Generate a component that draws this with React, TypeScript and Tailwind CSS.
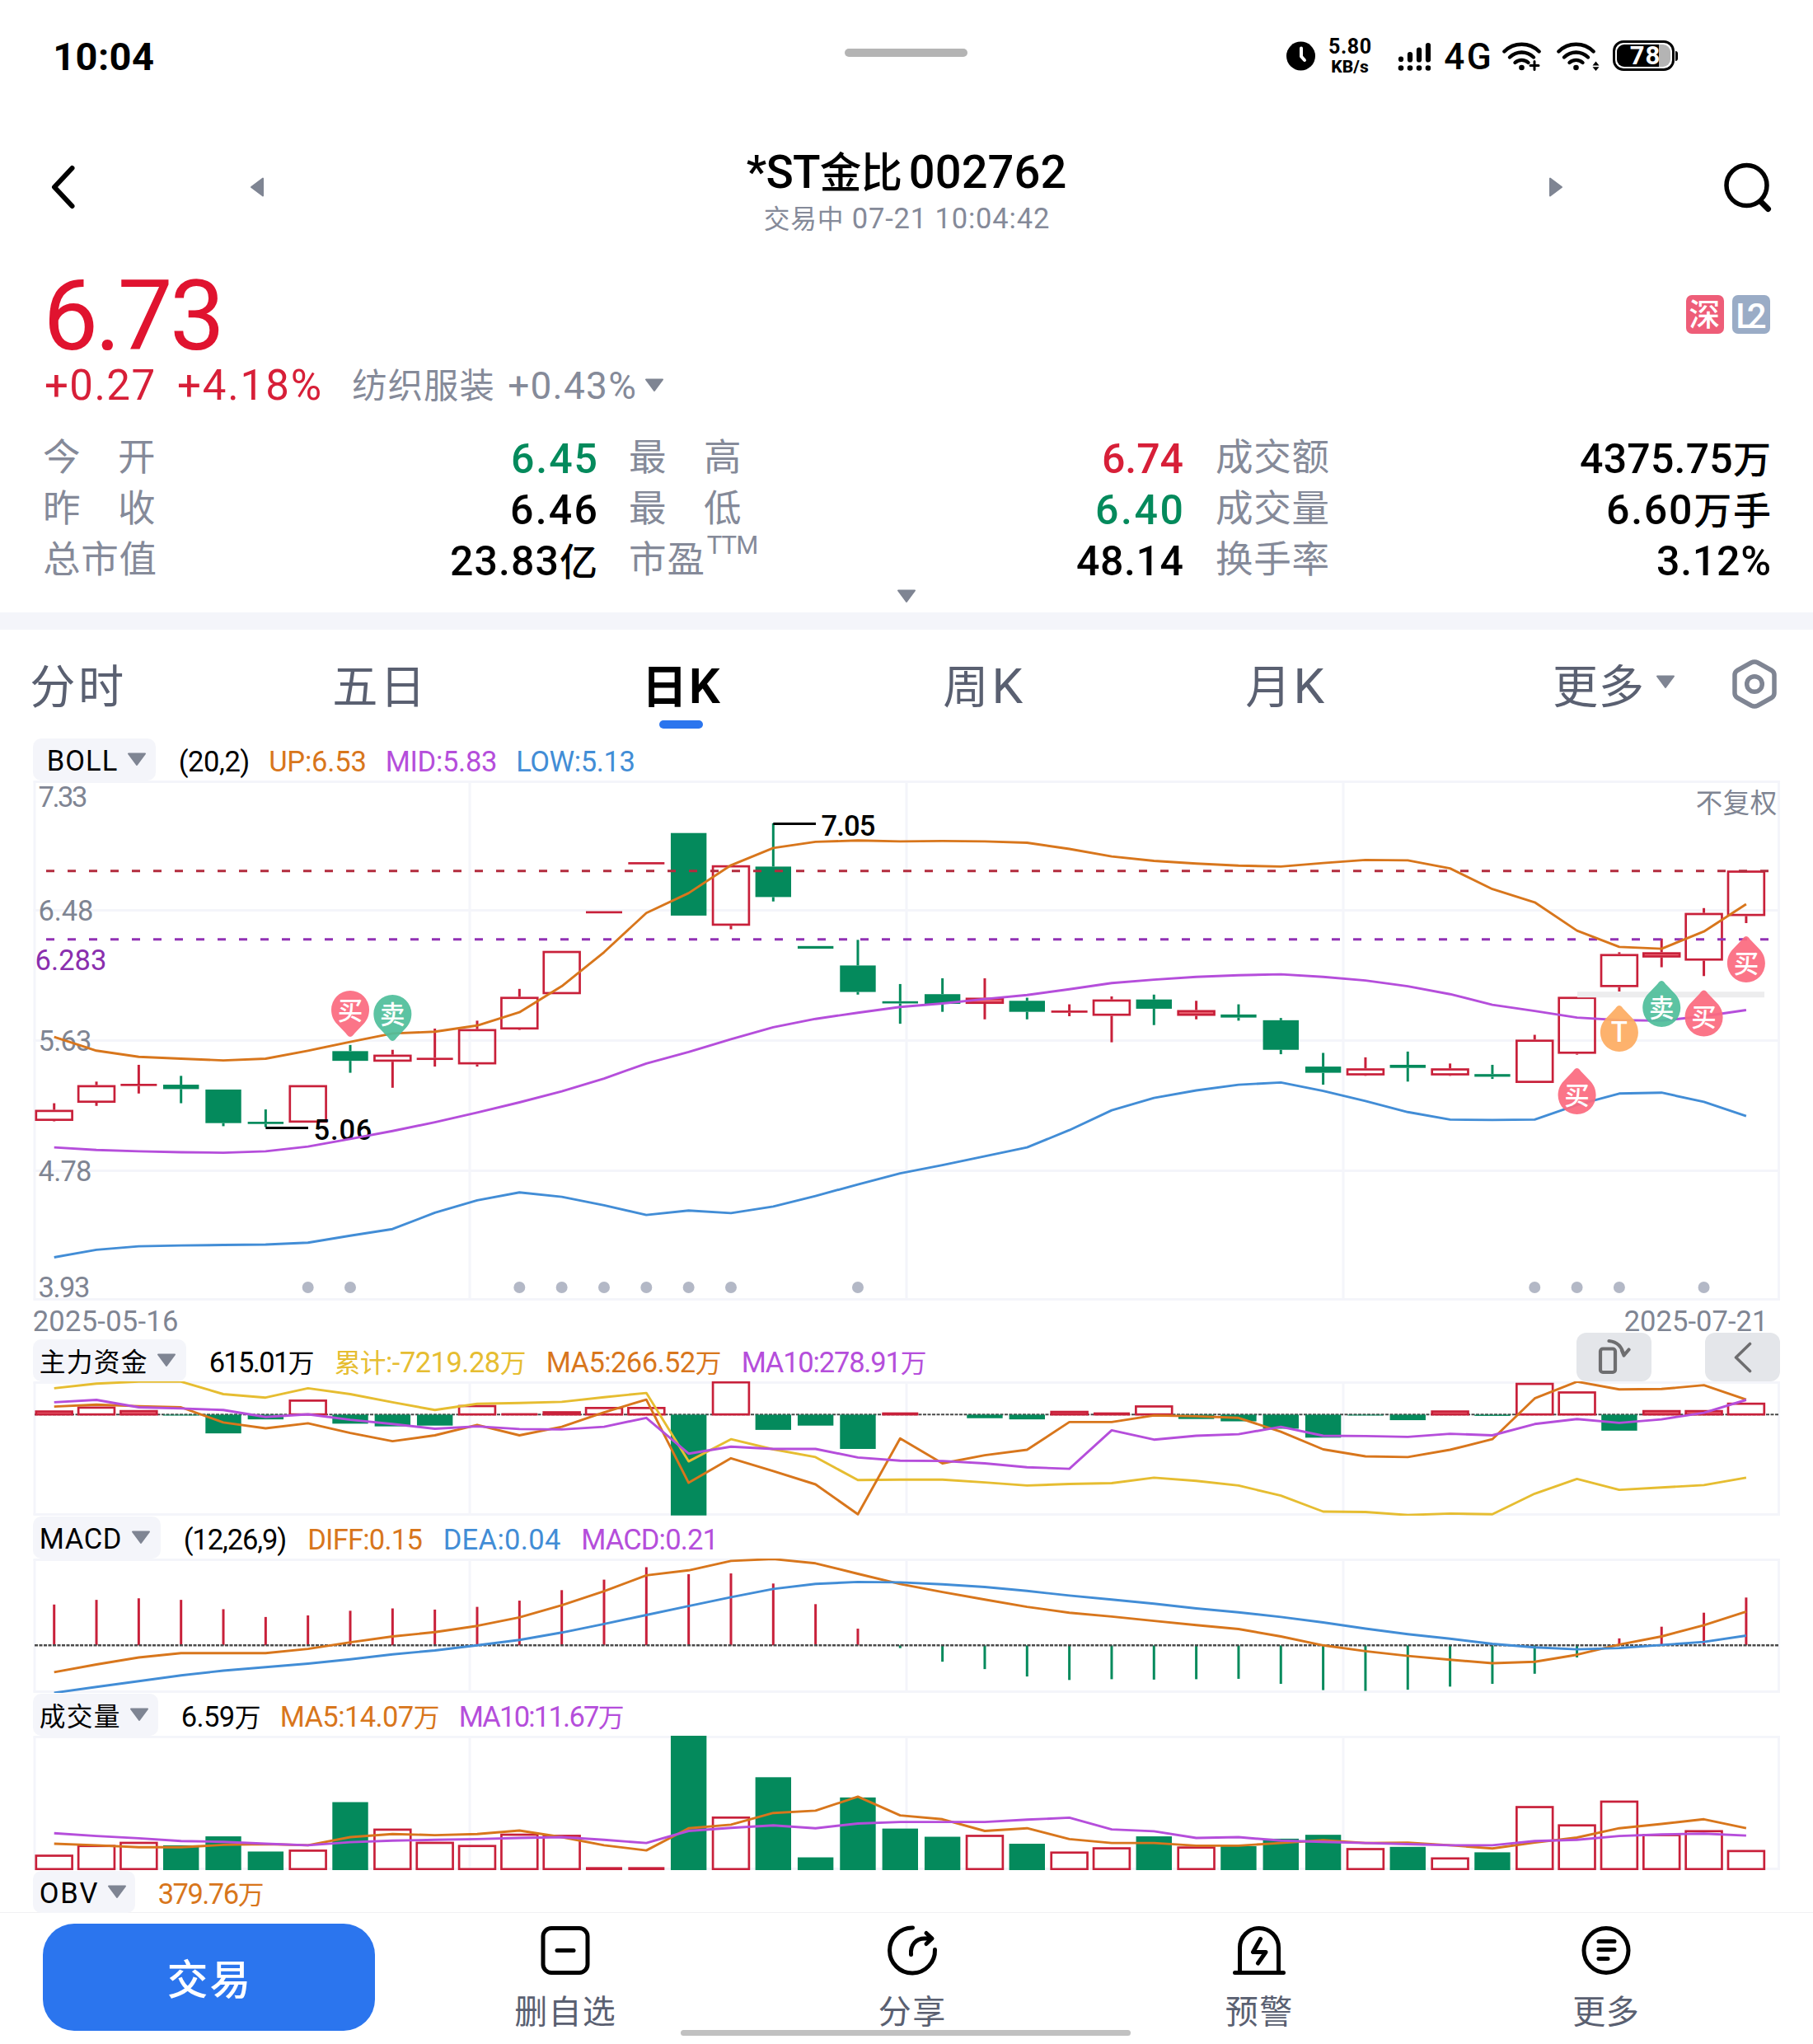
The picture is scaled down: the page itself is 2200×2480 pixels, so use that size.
import React, { useLayoutEffect, useRef, useState } from "react";
import clsx from "clsx";

const RED = "#c8203a";
const GREEN = "#048a5c";
const ORANGE = "#d8761c";
const PURPLE = "#b54edb";
const BLUE = "#428dd6";
const YELLOW = "#e6bd31";
const GRID = "#f4f5fa";

/* Splits Chinese and Latin runs so each gets its own face and optical size. */
function Mixed({ text }: { text: string }) {
  const parts = text.split(/([\u4e00-\u9fff]+)/).filter(Boolean);
  return (
    <>
      {parts.map((p, i) =>
        /[\u4e00-\u9fff]/.test(p) ? (
          <span key={i} className="text-[0.92em] leading-none font-['Noto_Sans_CJK_SC',sans-serif]">
            {p}
          </span>
        ) : (
          <React.Fragment key={i}>{p}</React.Fragment>
        ),
      )}
    </>
  );
}

/* One line of text whose tracking is adjusted to fill a given width. */
function Fit({ text, w, className }: { text: string; w: number; className?: string }) {
  const ref = useRef<HTMLSpanElement>(null);
  const [ls, setLs] = useState(0);
  useLayoutEffect(() => {
    const el = ref.current;
    if (!el) return;
    el.style.letterSpacing = "0px";
    const size = parseFloat(getComputedStyle(el).fontSize);
    const nat = el.getBoundingClientRect().width;
    const next = (w + 0.08 * size - nat) / Math.max(1, text.length - 1);
    el.style.letterSpacing = `${next}px`;
    setLs(next);
  }, [text, w]);
  return (
    <span className={clsx("block shrink-0 whitespace-nowrap", className)} style={{ width: w }}>
      <span ref={ref} className="-ml-[0.04em] inline-block" style={{ letterSpacing: `${ls}px` }}>
        <Mixed text={text} />
      </span>
    </span>
  );
}

function Caret({ className = "text-[#7f8593]" }: { className?: string }) {
  return (
    <svg width="24" height="17" viewBox="0 0 24 17" className={clsx("shrink-0", className)}>
      <path d="M2 1.5h20L12 15z" fill="currentColor" stroke="currentColor" strokeWidth="2" strokeLinejoin="round" />
    </svg>
  );
}

/* ---------- status bar ---------- */

function Wifi({ variant }: { variant: "plus" | "arrows" }) {
  return (
    <svg width="52" height="36" viewBox="0 0 52 36" fill="none" stroke="#000" strokeWidth="4.4" strokeLinecap="round">
      <path d="M2.4 12.5C14 .8 33 .8 44.6 12.5" />
      <path d="M9 19.5c8.500-8 20.500-8 29 0" />
      <path d="M15.500 26c4.500-4.200 11.500-4.200 16 0" />
      <circle cx="23.500" cy="32" r="3.300" fill="#000" stroke="none" />
      {variant === "plus" ? (
        <path d="M39 24.500v10M34 29.500h10" strokeWidth="3" />
      ) : (
        <path d="M47.500 24.500l4 5h-8zM47.500 36l4-4.800h-8z" fill="#000" stroke="none" />
      )}
    </svg>
  );
}

function StatusBar() {
  return (
    <div className="relative flex h-[135px] items-center pl-[66px] font-semibold">
      <Fit text="10:04" w={119} className="pt-[3px] text-[47px] leading-[60px] font-bold" />
      <div className="absolute top-[59px] left-[1025px] h-[10px] w-[149px] rounded-full bg-[#b4b4b4]" />
      <svg width="36" height="36" viewBox="0 0 36 36" className="ml-[1376px]">
        <circle cx="17.500" cy="18" r="17.500" />
        <path d="M18 8.500v10l4 4.500" fill="none" stroke="#fff" strokeWidth="4" strokeLinecap="round" strokeLinejoin="round" />
      </svg>
      <div className="ml-[15px] flex w-[52px] flex-col items-center pt-[2px] font-bold">
        <Fit text="5.80" w={50} className="text-[25px] leading-[24px]" />
        <Fit text="KB/s" w={44} className="text-[21px] leading-[24px] font-extrabold" />
      </div>
      <svg width="40" height="36" viewBox="0 0 40 36" className="ml-[32px]">
        {[0, 1, 2, 3].map((i) => (
          <circle key={i} cx={4 + i * 11} cy="32.500" r="3.300" />
        ))}
        <g stroke="#000" strokeWidth="6.200" strokeLinecap="round">
          <path d="M4 21.500v.5M15 16v6.500M26 10.500v12M37 5v17.500" />
        </g>
      </svg>
      <Fit text="4G" w={54} className="ml-[18px] pt-[2px] text-[44px] leading-[60px] font-medium" />
      <div className="ml-[15px]">
        <Wifi variant="plus" />
      </div>
      <div className="ml-[14px]">
        <Wifi variant="arrows" />
      </div>
      <div className="relative ml-[16px] flex h-[37px] w-[75px] items-center rounded-[13px] border-[3px] border-black bg-white p-[2px]">
        <div className="flex h-full w-full items-center rounded-[9px] bg-[#b4b4b4]">
          <div className="flex h-full w-[51px] items-center justify-end rounded-l-[9px] bg-black">
            <Fit text="78" w={34} className="text-[31px] leading-[27px] font-bold text-white" />
          </div>
        </div>
        <div className="absolute top-[10px] -right-[7px] h-[12px] w-[3px] rounded-r-full bg-black" />
      </div>
    </div>
  );
}

/* ---------- header ---------- */

function Header() {
  return (
    <div className="flex h-[184px] items-center">
      <svg width="34" height="58" viewBox="0 0 34 58" className="ml-[59px]" fill="none" stroke="#000" strokeWidth="6" strokeLinecap="round" strokeLinejoin="round">
        <path d="M28.500 6L7 29l21.500 23" />
      </svg>
      <svg width="18" height="24" viewBox="0 0 18 24" className="ml-[210px]" fill="#7f8593">
        <path d="M16 1.500v21L2 12z" stroke="#7f8593" strokeWidth="2" strokeLinejoin="round" />
      </svg>
      <div className="mt-[20px] flex flex-1 flex-col items-center">
        <div className="flex">
          <Fit text="*ST金比" w={185} className="text-[55px] leading-[56px] font-medium" />
          <Fit text="002762" w={187} className="ml-[12px] text-[56px] leading-[56px] font-medium" />
        </div>
        <Fit text="交易中 07-21 10:04:42" w={344} className="text-[34.500px] leading-[56px] text-[#858a99]" />
      </div>
      <svg width="18" height="24" viewBox="0 0 18 24" className="mr-[191px]" fill="#7f8593">
        <path d="M2 1.500v21L16 12z" stroke="#7f8593" strokeWidth="2" strokeLinejoin="round" />
      </svg>
      <svg width="64" height="64" viewBox="0 0 64 64" className="mr-[48px]" fill="none" stroke="#000" strokeWidth="5.500" strokeLinecap="round">
        <circle cx="31.500" cy="30" r="24.500" />
        <path d="M49 50l8.500 8.500" strokeWidth="7" />
      </svg>
    </div>
  );
}

/* ---------- quote ---------- */

type Cell = { label: string; spread?: boolean; sup?: string; value: string; w: number; color?: string };

const quoteColumns: Cell[][] = [
  [
    { label: "今开", spread: true, value: "6.45", w: 101, color: "text-[#048a5c]" },
    { label: "昨收", spread: true, value: "6.46", w: 102 },
    { label: "总市值", value: "23.83亿", w: 175 },
  ],
  [
    { label: "最高", spread: true, value: "6.74", w: 95, color: "text-[#d71f38]" },
    { label: "最低", spread: true, value: "6.40", w: 103, color: "text-[#048a5c]" },
    { label: "市盈", sup: "TTM", value: "48.14", w: 126 },
  ],
  [
    { label: "成交额", value: "4375.75万", w: 228 },
    { label: "成交量", value: "6.60万手", w: 196 },
    { label: "换手率", value: "3.12%", w: 135 },
  ],
];

function QuoteLabel({ cell }: { cell: Cell }) {
  if (cell.spread) {
    return (
      <span className="flex w-[134px] justify-between">
        {[...cell.label].map((ch) => (
          <Fit key={ch} text={ch} w={43} />
        ))}
      </span>
    );
  }
  if (cell.sup) {
    return (
      <span className="flex">
        <Fit text={cell.label} w={88} />
        <Fit text={cell.sup} w={60} className="-mt-[16px] ml-[6px] text-[31px]" />
      </span>
    );
  }
  return <Fit text={cell.label} w={134} />;
}

function Quote() {
  return (
    <div>
      <div className="flex h-[124px] items-center justify-between pr-[52px] pl-[57px]">
        <Fit text="6.73" w={211} className="pt-[6px] text-[119px] leading-[118px] font-[450] text-[#e0132f]" />
        <div className="flex gap-[10px] font-medium text-white">
          <span className="flex h-[47px] w-[46px] items-center justify-center rounded-[7px] bg-[#ee5d78]">
            <Fit text="深" w={36} className="text-[41px] leading-[46px]" />
          </span>
          <span className="flex h-[47px] w-[46px] items-center justify-center rounded-[7px] bg-[#9aacc6]">
            <Fit text="L2" w={34} className="pt-[4px] text-[42px] leading-[43px]" />
          </span>
        </div>
      </div>
      <div className="flex h-[48px] items-center pl-[56px] text-[51px] leading-[48px] text-[#d71f38]">
        <Fit text="+0.27" w={130} className="pt-[2px] font-[450]" />
        <Fit text="+4.18%" w={171} className="ml-[31px] pt-[2px] font-[450]" />
        <div className="flex items-center text-[46px] text-[#858a99]">
          <Fit text="纺织服装" w={169} className="ml-[41px]" />
          <Fit text="+0.43%" w={152} className="ml-[20px] pt-[2px]" />
          <div className="ml-[12px]">
            <Caret />
          </div>
        </div>
      </div>
      <div className="mt-[34px] flex pr-[53px] pl-[54px]">
        {quoteColumns.map((col, i) => (
          <div
            key={i}
            className={clsx(
              "flex flex-col",
              i === 0 && "w-[669px]",
              i === 1 && "ml-[42px] w-[669px]",
              i === 2 && "ml-[43px] w-[670px]",
            )}
          >
            {col.map((c) => (
              <div key={c.label} className="flex h-[62px] items-center justify-between">
                <span className="mt-[-4px] text-[49.500px] leading-[62px] text-[#858a99]">
                  <QuoteLabel cell={c} />
                </span>
                <Fit text={c.value} w={c.w} className={clsx("pt-[3px] text-[50px] leading-[59px] font-medium", c.color ?? "text-black")} />
              </div>
            ))}
          </div>
        ))}
      </div>
      <div className="flex h-[32px] justify-center pt-[4px]">
        <Caret />
      </div>
    </div>
  );
}

/* ---------- period tabs ---------- */

const periods = [
  { label: "分时", w: 109 },
  { label: "五日", w: 108 },
  { label: "日K", w: 90, active: true },
  { label: "周K", w: 92 },
  { label: "月K", w: 91 },
];

function PeriodTabs() {
  return (
    <div className="flex h-[131px] items-center text-[60px] leading-[80px] text-[#5a6071]">
      <div className="-ml-[90px] flex pt-[7px]">
        {periods.map((p) => (
          <div key={p.label} className="relative flex w-[366.500px] justify-center">
            <Fit text={p.label} w={p.w} className={clsx(p.active && "font-semibold text-black")} />
            {p.active && <span className="absolute top-[81px] h-[10px] w-[53px] rounded-full bg-[#2b75ee]" />}
          </div>
        ))}
      </div>
      <Fit text="更多" w={106} className="ml-[144px] pt-[7px]" />
      <div className="ml-[16px] pb-[4px]">
        <Caret />
      </div>
      <svg width="62" height="64" viewBox="0 0 62 64" className="ml-[65px]" fill="none" stroke="#7f8593" strokeWidth="5.500" strokeLinejoin="round">
        <path d="M31 5Q33 5 35 6L52 15.500Q55 17.500 55 21V43Q55 46.500 52 48.500L35 58Q31 60 27 58L10 48.500Q7 46.500 7 43V21Q7 17.500 10 15.500L27 6Q29 5 31 5Z" />
        <circle cx="31" cy="32" r="9.300" />
      </svg>
    </div>
  );
}

/* ---------- indicator legend ---------- */

type LegendItem = [text: string, width: number, color: string];

function Legend({ name, nameWidth, chip, inset = "pl-[9px]", gap = "gap-[26.500px]", items }: { name: string; nameWidth: number; chip: string; inset?: string; gap?: string; items: LegendItem[] }) {
  return (
    <div className="ml-[40px] flex h-[52px] items-center text-[34.500px] leading-[48px] font-[430]">
      <div className={clsx("flex h-[51px] shrink-0 items-center gap-[13px] rounded-[10px] bg-[#f4f5fa]", chip, inset)}>
        <Fit text={name} w={nameWidth} className="pt-[4px] text-black" />
        <Caret />
      </div>
      <div className={clsx("ml-[29px] flex pt-[5px]", gap)}>
        {items.map(([text, w, color]) => (
          <Fit key={text} text={text} w={w} className={color} />
        ))}
      </div>
    </div>
  );
}

const black = "text-black";
const orange = "text-[#d8761c]";
const purple = "text-[#b54edb]";
const blue = "text-[#428dd6]";
const yellow = "text-[#e6bd31]";

/* ---------- charts ---------- */

const cx = (i: number) => 65.7 + 51.33 * i;
const gridX = [42, 570, 1100, 1630, 2158.5];

function Line({ data, y, color }: { data: number[]; y: (v: number) => number; color: string }) {
  return (
    <polyline
      fill="none"
      stroke={color}
      strokeWidth="2.900"
      strokeLinejoin="round"
      points={data.map((v, i) => `${cx(i).toFixed(1)},${y(v).toFixed(1)}`).join(" ")}
    />
  );
}

function Bar({ i, top, bottom, up }: { i: number; top: number; bottom: number; up: boolean }) {
  const x = cx(i);
  if (!up) return <rect x={x - 21.7} y={top} width={43.4} height={Math.max(bottom - top, 1)} fill={GREEN} />;
  const h = bottom - top;
  if (h < 4) return <rect x={x - 22} y={top} width={44} height={h} fill={RED} />;
  return <rect x={x - 21.9} y={top + 1.3} width={43.8} height={h - 2.6} fill={h < 7.6 ? "#f06a78" : "none"} stroke={RED} strokeWidth="2.700" />;
}

function ChartText({ x, y, w, size = 34.5, color = "#7f8593", weight = 430, cjk, children }: { x: number; y: number; w: number; size?: number; color?: string; weight?: number; cjk?: boolean; children: string }) {
  return (
    <text
      x={x - 0.04 * size}
      y={y + (cjk ? 0.38 : 0.3555) * size}
      textLength={w + 0.08 * size}
      fontSize={size}
      fontWeight={weight}
      fill={color}
      fontFamily={cjk ? "'Noto Sans CJK SC', sans-serif" : "Roboto, sans-serif"}
    >
      {children}
    </text>
  );
}

/* body top, body bottom, wick high, wick low, rising */
type Candle = [number, number, number, number, 0 | 1];
const candles: Candle[] = [
  [1095, 1120, 1080, 1121, 1], [1039, 1079, 1031, 1086, 1], [1036, 1041, 993, 1058, 1], [1038, 1048, 1018, 1080, 0],
  [1049, 1125, 1049, 1132, 0], [1122, 1127, 1094, 1134, 0], [1039, 1124, 1039, 1124, 1], [962, 984, 948, 1011, 0],
  [970, 986, 959, 1045, 1], [977, 982, 911, 997, 1], [912, 992, 893, 997, 1], [839, 913, 821, 914, 1],
  [735, 833, 735, 833, 1], [645, 650, 645, 650, 1], [534, 539, 534, 539, 1], [468, 655, 468, 655, 0],
  [541, 678, 541, 686, 1], [544, 613, 446, 623, 0], [724, 730, 724, 730, 0], [768, 828, 710, 834, 0],
  [849, 854, 810, 900, 0], [833, 855, 797, 873, 0], [841, 855, 797, 890, 1], [848, 873, 841, 890, 0],
  [870, 875, 856, 883, 1], [845, 882, 838, 942, 1], [845, 866, 834, 903, 0], [869, 882, 848, 890, 1],
  [879, 886, 856, 893, 0], [892, 959, 887, 969, 0], [997, 1011, 966, 1038, 0], [1001, 1017, 976, 1018, 1],
  [993, 1000, 963, 1031, 0], [1001, 1017, 990, 1018, 1], [1014, 1020, 993, 1025, 0], [936, 1034, 925, 1034, 1],
  [839, 968, 839, 970, 1], [742, 817, 738, 827, 1], [738, 750, 707, 772, 1], [649, 757, 638, 792, 1],
  [553, 656, 553, 672, 1],
];
const bollUp = [930, 961, 975, 979, 983, 979, 961, 941, 922, 918, 904, 874, 815, 738, 649, 604, 541, 502, 488, 485, 487, 486, 487, 490, 504, 521, 531, 537, 542, 544, 536, 529, 530, 548, 595, 625, 689, 726, 730, 691, 629];
const bollMid = [1180, 1186, 1189, 1191, 1192, 1189, 1178, 1161, 1143, 1123, 1101, 1078, 1053, 1024, 990, 964, 935, 908, 889, 875, 862, 854, 844, 835, 822, 808, 800, 794, 790, 788, 794, 802, 815, 833, 857, 871, 886, 892, 893, 883, 869];
const bollLow = [1429, 1412, 1404, 1402, 1401, 1400, 1396, 1380, 1365, 1328, 1300, 1282, 1292, 1311, 1333, 1323, 1329, 1314, 1290, 1264, 1239, 1220, 1200, 1180, 1141, 1096, 1068, 1051, 1038, 1033, 1052, 1075, 1100, 1117, 1118, 1117, 1084, 1058, 1056, 1077, 1109];
const eventDays = [6, 7, 11, 12, 13, 14, 15, 16, 19, 35, 36, 37, 39];

function Pin({ x, tip, label, fill, down }: { x: number; tip: number; label: string; fill: string; down?: boolean }) {
  const c = down ? tip - 33 : tip + 32;
  return (
    <g opacity="0.93">
      <g transform={down ? `translate(${x} ${tip}) scale(1 -1)` : `translate(${x} ${tip})`}>
        <path d="M0 0C2.500 0 4 3 6 5L16 15.500C20.500 20 23 26 23 33A23 23 0 0 1 -23 33C-23 26 -20.500 20 -16 15.500L-6 5C-4 3 -2.500 0 0 0Z" fill={fill} />
      </g>
      <text
        x={x}
        y={c + 11.5}
        textAnchor="middle"
        fontSize={label === "T" ? 34 : 30.5}
        fontWeight={500}
        fill="#fff"
        fontFamily="'Noto Sans CJK SC', sans-serif"
      >
        {label}
      </text>
    </g>
  );
}

function MainChart() {
  const y = (v: number) => 760 + v * 0.5357;
  const pink = "#fb6b80";
  const mint = "#50bf9c";
  return (
    <svg width="2200" height="632" viewBox="0 947 2200 632" className="block">
      <g stroke={GRID} strokeWidth="3">
        {[948.5, 1104.5, 1262.5, 1420.5, 1576.5].map((v) => (
          <path key={v} d={`M40.500 ${v}H2160`} />
        ))}
        {gridX.map((v) => (
          <path key={v} d={`M${v} 948V1577`} />
        ))}
      </g>
      <ChartText x={48} y={967} w={57}>7.33</ChartText>
      <ChartText x={48} y={1104.5} w={64}>6.48</ChartText>
      <ChartText x={48} y={1262.5} w={62}>5.63</ChartText>
      <ChartText x={48} y={1420.5} w={62}>4.78</ChartText>
      <ChartText x={48} y={1562} w={60}>3.93</ChartText>
      <ChartText x={2059} y={974} w={96} size={32.5} weight={400} cjk>不复权</ChartText>

      {candles.map(([t, b, h, l, up], i) => (
        <g key={i}>
          <g stroke={up ? RED : GREEN} strokeWidth="3">
            {h < t && <path d={`M${cx(i)} ${y(h)}V${y(t)}`} />}
            {l > b && <path d={`M${cx(i)} ${y(b)}V${y(l)}`} />}
          </g>
          <Bar i={i} top={y(t)} bottom={y(b)} up={!!up} />
        </g>
      ))}

      <path d={`M${cx(5)} 1368.500H374`} stroke="#000" strokeWidth="3" />
      <ChartText x={382} y={1370.500} w={68} color="#000" weight={500}>5.06</ChartText>
      <path d={`M${cx(17)} 999.500H990`} stroke="#000" strokeWidth="3" />
      <ChartText x={998} y={1002} w={63} color="#000" weight={500}>7.05</ChartText>

      <path d="M56 1056.800H2146" stroke="#b32c3e" strokeWidth="3" strokeDasharray="10 16" />
      <path d="M56 1139.800H2146" stroke="#9132b4" strokeWidth="3" strokeDasharray="10 16" />
      <ChartText x={44} y={1164.500} w={84} color="#8a2fae">6.283</ChartText>
      <path d="M1914 1206.800H2141" stroke="#ededee" strokeWidth="7" />

      <Line data={bollUp} y={y} color={ORANGE} />
      <Line data={bollMid} y={y} color={PURPLE} />
      <Line data={bollLow} y={y} color={BLUE} />

      {eventDays.map((i) => (
        <circle key={i} cx={cx(i)} cy={1562} r="7" fill="#b3b8c6" />
      ))}

      <Pin x={cx(7)} tip={1258} label="买" fill={pink} down />
      <Pin x={cx(8)} tip={1263} label="卖" fill={mint} down />
      <Pin x={cx(36)} tip={1296} label="买" fill={pink} />
      <Pin x={cx(37)} tip={1220} label="T" fill="#fdad62" />
      <Pin x={cx(38)} tip={1190} label="卖" fill={mint} />
      <Pin x={cx(39)} tip={1201.5} label="买" fill={pink} />
      <Pin x={cx(40)} tip={1136} label="买" fill={pink} />
    </svg>
  );
}

function SubFrame({ top, children }: { top: number; children: React.ReactNode }) {
  return (
    <svg width="2200" height="163" viewBox={`0 ${top} 2200 163`} className="block">
      <g stroke={GRID} strokeWidth="3">
        <path d={`M40.500 ${top + 1.5}H2160M40.500 ${top + 161.5}H2160`} />
        {gridX.map((v) => (
          <path key={v} d={`M${v} ${top + 1}V${top + 162}`} />
        ))}
      </g>
      {children}
    </svg>
  );
}

const sy = (v: number) => 1590 + v * 0.47194;

/* [far edge of the bar, inflow] */
const fundBars: [number, 0 | 1][] = [
  [257, 1], [247, 1], [256, 1], [269, 0], [316, 0], [280, 0], [229, 1], [291, 0], [298, 0], [296, 0], [243, 1],
  [264, 1], [259, 1], [248, 1], [248, 1], [527, 0], [182, 1], [307, 0], [296, 0], [356, 0], [262, 1], [268, 0],
  [277, 0], [280, 0], [258, 1], [262, 1], [244, 1], [279, 0], [285, 0], [304, 0], [327, 0], [269, 0], [282, 0],
  [257, 1], [271, 0], [186, 1], [208, 1], [309, 0], [256, 1], [256, 1], [237, 1],
];
const fundSum = [200, 188, 183, 183, 215, 224, 200, 215, 236, 256, 240, 238, 235, 223, 212, 388, 331, 357, 377, 436, 435, 435, 442, 450, 446, 444, 430, 438, 450, 476, 517, 518, 526, 522, 524, 471, 433, 461, 455, 449, 430];
const fundMa5 = [247, 242, 246, 249, 288, 303, 290, 315, 336, 321, 294, 321, 299, 262, 229, 443, 380, 413, 447, 524, 329, 393, 372, 358, 287, 287, 270, 272, 276, 312, 357, 375, 377, 358, 331, 226, 183, 203, 202, 192, 229];
const fundMa10 = [236, 230, 249, 252, 256, 274, 267, 281, 292, 304, 298, 305, 306, 299, 276, 368, 350, 356, 356, 378, 386, 387, 393, 403, 407, 308, 332, 322, 318, 299, 322, 323, 325, 317, 321, 292, 279, 289, 280, 263, 230];

function FundChart() {
  return (
    <SubFrame top={1676}>
      <path d={`M42 ${sy(267.5)}H2158`} stroke="#4a4a4a" strokeWidth="2" strokeDasharray="4 1.500" />
      {fundBars.map(([v, up], i) =>
        up ? (
          <Bar key={i} i={i} top={sy(v)} bottom={sy(270)} up />
        ) : (
          v > 268 && <Bar key={i} i={i} top={sy(268)} bottom={sy(v)} up={false} />
        ),
      )}
      <Line data={fundSum} y={sy} color={YELLOW} />
      <Line data={fundMa5} y={sy} color={ORANGE} />
      <Line data={fundMa10} y={sy} color={PURPLE} />
    </SubFrame>
  );
}

const macdBars = [756, 744, 740, 744, 768, 788, 784, 772, 766, 769, 762, 746, 719, 692, 660, 678, 676, 702, 755, 818, 868, 903, 922, 941, 950, 948, 949, 948, 947, 960, 976, 978, 975, 967, 960, 934, 892, 843, 813, 777, 738];
const macdDiff = [930, 910, 892, 881, 881, 881, 870, 853, 838, 827, 811, 789, 758, 722, 681, 668, 644, 639, 650, 677, 703, 724, 743, 762, 777, 787, 798, 809, 819, 838, 861, 876, 888, 898, 907, 903, 885, 859, 838, 809, 774];
const macdDea = [983, 968, 953, 938, 926, 917, 908, 897, 884, 874, 861, 847, 828, 806, 783, 760, 737, 716, 703, 698, 699, 704, 711, 721, 733, 743, 754, 766, 776, 788, 802, 818, 832, 844, 857, 866, 871, 868, 860, 852, 836];

function MacdChart() {
  return (
    <SubFrame top={1891}>
      {macdBars.map((v, i) => (
        <path key={i} d={`M${cx(i)} ${sy(861)}V${sy(v)}`} stroke={v < 861 ? RED : GREEN} strokeWidth="3" />
      ))}
      <path d={`M42 ${sy(861)}H2158`} stroke="#4a4a4a" strokeWidth="2.500" strokeDasharray="4 1.500" />
      <Line data={macdDiff} y={sy} color={ORANGE} />
      <Line data={macdDea} y={sy} color={BLUE} />
    </SubFrame>
  );
}

const volumeBars: [number, 0 | 1][] = [
  [1399, 1], [1374, 1], [1366, 1], [1375, 0], [1352, 0], [1391, 0], [1386, 1], [1264, 0], [1332, 1], [1366, 1],
  [1374, 1], [1345, 1], [1348, 1], [1431, 1], [1431, 1], [1093, 0], [1301, 1], [1200, 0], [1406, 0], [1252, 0],
  [1332, 0], [1353, 0], [1348, 1], [1371, 0], [1391, 1], [1380, 1], [1352, 0], [1378, 1], [1377, 0], [1358, 0],
  [1348, 0], [1382, 1], [1379, 0], [1406, 1], [1393, 0], [1274, 1], [1321, 1], [1260, 1], [1346, 1], [1336, 1],
  [1387, 1],
];
const volumeMa5 = [1371, 1375, 1380, 1380, 1374, 1372, 1375, 1354, 1346, 1349, 1346, 1337, 1354, 1375, 1388, 1331, 1322, 1292, 1286, 1250, 1298, 1308, 1338, 1331, 1359, 1369, 1369, 1376, 1376, 1369, 1362, 1369, 1368, 1375, 1383, 1368, 1355, 1331, 1320, 1308, 1331];
const volumeMa10 = [1344, 1351, 1357, 1364, 1366, 1371, 1375, 1367, 1363, 1361, 1359, 1356, 1354, 1361, 1369, 1338, 1330, 1324, 1331, 1319, 1315, 1315, 1315, 1309, 1304, 1334, 1339, 1356, 1354, 1363, 1366, 1369, 1372, 1375, 1375, 1364, 1361, 1351, 1347, 1345, 1350];

function VolumeChart() {
  return (
    <SubFrame top={2106}>
      {volumeBars.map(([v, up], i) => (
        <Bar key={i} i={i} top={sy(v)} bottom={sy(1439)} up={!!up} />
      ))}
      <Line data={volumeMa5} y={sy} color={ORANGE} />
      <Line data={volumeMa10} y={sy} color={PURPLE} />
    </SubFrame>
  );
}

function FloatingButtons() {
  return (
    <div className="absolute top-[38px] right-[40px] flex gap-[65px]">
      <button className="flex h-[59px] w-[91px] items-center justify-center rounded-[12px] bg-[#e4e6ea] pb-[2px]">
        <svg width="40" height="44" viewBox="0 0 40 44" fill="none" stroke="#6e6e70" strokeWidth="4.200" strokeLinecap="round" strokeLinejoin="round">
          <rect x="3" y="12.500" width="18" height="28.500" rx="3" />
          <path d="M13.500 3C24 4 29.500 11 31.500 20.500L37.500 13.500M29 14.500L31.500 20.500" />
        </svg>
      </button>
      <button className="flex h-[59px] w-[91px] items-center justify-center rounded-[12px] bg-[#e4e6ea]">
        <svg width="24" height="38" viewBox="0 0 24 38" fill="none" stroke="#6e6e70" strokeWidth="3.600" strokeLinecap="round" strokeLinejoin="round">
          <path d="M20.500 2.500L3.500 19l17 16.500" />
        </svg>
      </button>
    </div>
  );
}

/* ---------- bottom bar ---------- */

function NavItem({ label, w, children }: { label: string; w: number; children: React.ReactNode }) {
  return (
    <div className="flex w-[421px] flex-col items-center pt-[15px]">
      <svg width="66" height="62" viewBox="0 0 66 62" fill="none" stroke="#000" strokeWidth="5" strokeLinecap="round" strokeLinejoin="round">
        {children}
      </svg>
      <Fit text={label} w={w} className="mt-[18px] text-[43.500px] leading-[50px] text-[#5a6071]" />
    </div>
  );
}

function BottomBar() {
  return (
    <div className="relative flex h-[159px] bg-white">
      <button className="mt-[13px] ml-[52px] flex h-[130px] w-[403px] items-center justify-center rounded-[38px] bg-[#2b75ee] pt-[5px] text-white">
        <Fit text="交易" w={97} className="text-[54px] leading-[60px] font-medium" />
      </button>
      <div className="ml-[20px] flex">
        <NavItem label="删自选" w={119}>
          <rect x="6" y="3.500" width="54" height="54" rx="10" />
          <path d="M23 30.500h20" />
        </NavItem>
        <NavItem label="分享" w={78}>
          <path d="M33.500 3A27.500 27.500 0 1 0 60.500 29.500" />
          <path d="M31.500 35.500C30.500 23 38 16 48 16H56M50 9.500l7 6.500-7 6.500" />
        </NavItem>
        <NavItem label="预警" w={78}>
          <path d="M3.500 57.500H62.500M9.500 57V27a23.500 23.500 0 0 1 47 0v30" />
          <path d="M34.500 16.500L25.500 32.500H41L31.500 46" />
        </NavItem>
        <NavItem label="更多" w={77}>
          <circle cx="33" cy="30.500" r="27" />
          <path d="M24 19.500h19M24 29.500h19M24 40.500h11" />
        </NavItem>
      </div>
      <div className="absolute bottom-[10px] left-[826px] h-[7px] w-[546px] rounded-full bg-[#c1c1c1]" />
    </div>
  );
}

export default function App() {
  return (
    <div className="relative h-[2480px] w-[2200px] overflow-hidden bg-white font-[Roboto,'Noto_Sans_CJK_SC',sans-serif] text-black">
      <StatusBar />
      <Header />
      <Quote />
      <div className="h-[21px] bg-[#f4f5fa]" />
      <PeriodTabs />
      <Legend
        name="BOLL"
        nameWidth={83}
        chip="w-[149px]"
        inset="pl-[18px]"
        gap="gap-[25.500px]"
        items={[["(20,2)", 84, black], ["UP:6.53", 116, orange], ["MID:5.83", 133, purple], ["LOW:5.13", 142, blue]]}
      />
      <MainChart />
      <div className="relative flex h-[45px] items-center justify-between pr-[56px] pl-[41px] text-[34.500px] leading-[45px] text-[#7f8593]">
        <Fit text="2025-05-16" w={174} className="pt-[3px] font-[430]" />
        <Fit text="2025-07-21" w={172} className="pt-[3px] font-[430]" />
        <FloatingButtons />
      </div>
      <Legend
        name="主力资金"
        nameWidth={128}
        chip="w-[186px]"
        gap="gap-[27px]"
        items={[["615.01万", 125, black], ["累计:-7219.28万", 230, yellow], ["MA5:266.52万", 210, orange], ["MA10:278.91万", 222, purple]]}
      />
      <FundChart />
      <Legend
        name="MACD"
        nameWidth={97}
        chip="w-[155px]"
        gap="gap-[27.500px]"
        items={[["(12,26,9)", 123, black], ["DIFF:0.15", 137, orange], ["DEA:0.04", 140, blue], ["MACD:0.21", 164, purple]]}
      />
      <MacdChart />
      <Legend
        name="成交量"
        nameWidth={95}
        chip="w-[152px]"
        gap="gap-[26px]"
        items={[["6.59万", 94, black], ["MA5:14.07万", 191, orange], ["MA10:11.67万", 198, purple]]}
      />
      <VolumeChart />
      <div className="h-[52px] border-b border-[#f1f1f3]">
        <Legend name="OBV" nameWidth={68} chip="w-[124px]" items={[["379.76万", 126, orange]]} />
      </div>
      <BottomBar />
    </div>
  );
}
